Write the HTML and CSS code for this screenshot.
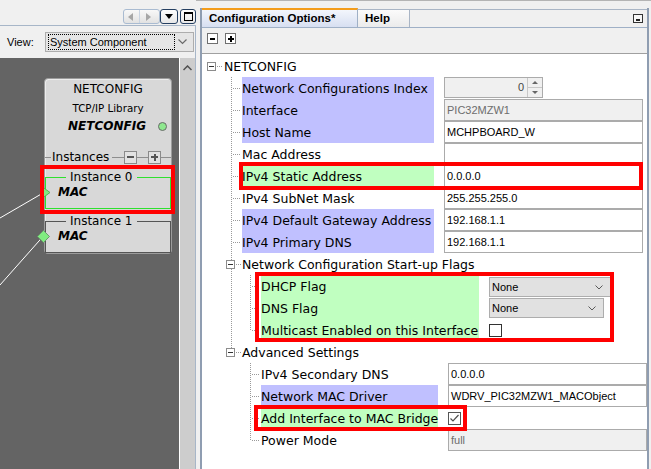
FILE: index.html
```html
<!DOCTYPE html>
<html>
<head>
<meta charset="utf-8">
<title>Configuration Options</title>
<link rel="stylesheet" href="styles.css">
</head>
<body>
<div class="screen">
  <div class="left">
    <div class="winbar">
      <div class="navbtn"><span class="tri-l"></span><span class="sep"></span><span class="tri-r"></span></div>
      <div class="wbtn"><span class="tri-d"></span></div>
      <div class="wbtn wmax"><span class="maxico"></span></div>
    </div>
    <div class="frame">
      <div class="viewrow">
        <span class="viewlbl">View:</span>
        <div class="viewcombo">
          <span class="focus">System Component</span>
          <svg class="chev" width="9" height="6" viewBox="0 0 9 6"><polyline points="0.5,0.5 4.5,4.5 8.5,0.5" fill="none" stroke="#6a6a6a" stroke-width="1.2"/></svg>
        </div>
      </div>
      <div class="canvasrow">
        <div class="canvas">
          <div class="node">
            <div class="ntitle">NETCONFIG</div>
            <div class="nsub">TCP/IP Library</div>
            <div class="nname"><span>NETCONFIG</span><span class="dot"></span></div>
            <div class="inst">
              <span class="ln l1"></span><span class="itxt">Instances</span><span class="ln l2"></span>
              <span class="ibtn iminus"></span><span class="ln l3"></span>
              <span class="ibtn iplus"></span><span class="ln l4"></span>
            </div>
            <fieldset class="fs fs0"><legend>Instance 0</legend><div class="mac">MAC</div></fieldset>
            <fieldset class="fs fs1"><legend>Instance 1</legend><div class="mac">MAC</div></fieldset>
          </div>
          <svg class="wires" width="179" height="411" viewBox="0 0 179 411">
            <line x1="43" y1="135" x2="0" y2="160" stroke="#ffffff" stroke-width="1"/>
            <line x1="43" y1="178.5" x2="0" y2="227" stroke="#ffffff" stroke-width="1"/>
            <polygon points="42.5,129 50,134.5 42.5,140" fill="#80ec80" stroke="#58b058" stroke-width="1"/>
            <polygon points="43.5,172.5 49.5,178.5 43.5,184.5 37.5,178.5" fill="#80ec80" stroke="#6a9a6a" stroke-width="1"/>
          </svg>
        </div>
        <div class="vscroll">
          <svg class="upchev" width="9" height="6" viewBox="0 0 9 6"><polyline points="0.5,5 4.5,1 8.5,5" fill="none" stroke="#505050" stroke-width="1.5"/></svg>
        </div>
      </div>
    </div>
  </div>

  <div class="rightwrap">
    <div class="panel">
      <div class="tabbar">
        <div class="tab active">Configuration Options*</div>
        <div class="tab help">Help</div>
        <div class="tabfill"><span class="minbtn"></span></div>
      </div>
      <div class="toolbar"><span class="tbtn tminus"></span><span class="tbtn tplus"></span></div>
      <div class="tree">
        <div class="row"><span class="g gx"><i class="exp"></i></span><span class="lbl0">NETCONFIG</span></div>

        <div class="row"><span class="g"></span><span class="g gt"></span><span class="lbl w1 lav">Network Configurations Index</span>
          <div class="val spin"><span class="spin-f">0</span><span class="spin-b"><span><i class="up"></i></span><span><i class="dn"></i></span></span></div></div>
        <div class="row"><span class="g"></span><span class="g gt"></span><span class="lbl w1 lav">Interface</span><div class="val box dis">PIC32MZW1</div></div>
        <div class="row"><span class="g"></span><span class="g gt"></span><span class="lbl w1 lav">Host Name</span><div class="val box">MCHPBOARD_W</div></div>
        <div class="row"><span class="g"></span><span class="g gt"></span><span class="lbl w1">Mac Address</span><div class="val box"></div></div>
        <div class="row"><span class="g"></span><span class="g gt"></span><span class="lbl w1 grn">IPv4 Static Address</span><div class="val box">0.0.0.0</div></div>
        <div class="row"><span class="g"></span><span class="g gt"></span><span class="lbl w1">IPv4 SubNet Mask</span><div class="val box">255.255.255.0</div></div>
        <div class="row"><span class="g"></span><span class="g gt"></span><span class="lbl w1 lav">IPv4 Default Gateway Address</span><div class="val box">192.168.1.1</div></div>
        <div class="row"><span class="g"></span><span class="g gt"></span><span class="lbl w1 lav">IPv4 Primary DNS</span><div class="val box">192.168.1.1</div></div>

        <div class="row"><span class="g"></span><span class="g gx gv"><i class="exp"></i></span><span class="lbl">Network Configuration Start-up Flags</span></div>
        <div class="row"><span class="g"></span><span class="g gv"></span><span class="g gt"></span><span class="lbl w2 grn">DHCP Flag</span>
          <div class="val combo c1"><span>None</span><svg width="8" height="5" viewBox="0 0 8 5"><polyline points="0.5,0.5 4,4 7.5,0.5" fill="none" stroke="#5a5a5a" stroke-width="1"/></svg></div></div>
        <div class="row"><span class="g"></span><span class="g gv"></span><span class="g gt"></span><span class="lbl w2 grn">DNS Flag</span>
          <div class="val combo c2"><span>None</span><svg width="8" height="5" viewBox="0 0 8 5"><polyline points="0.5,0.5 4,4 7.5,0.5" fill="none" stroke="#5a5a5a" stroke-width="1"/></svg></div></div>
        <div class="row"><span class="g"></span><span class="g gv"></span><span class="g ge"></span><span class="lbl w2 grn">Multicast Enabled on this Interface</span><span class="val chk"></span></div>

        <div class="row"><span class="g"></span><span class="g gx gh"><i class="exp"></i></span><span class="lbl">Advanced Settings</span></div>
        <div class="row"><span class="g"></span><span class="g"></span><span class="g gt"></span><span class="lbl w3">IPv4 Secondary DNS</span><div class="val box">0.0.0.0</div></div>
        <div class="row"><span class="g"></span><span class="g"></span><span class="g gt"></span><span class="lbl w3 lav">Network MAC Driver</span><div class="val box">WDRV_PIC32MZW1_MACObject</div></div>
        <div class="row"><span class="g"></span><span class="g"></span><span class="g gt"></span><span class="lbl w3 grn">Add Interface to MAC Bridge</span>
          <span class="val chk on"><svg width="11" height="11" viewBox="0 0 11 11"><polyline points="1.5,5.5 4,8 9.5,2" fill="none" stroke="#505050" stroke-width="1.2"/></svg></span></div>
        <div class="row"><span class="g"></span><span class="g"></span><span class="g ge"></span><span class="lbl w3">Power Mode</span><div class="val box dis">full</div></div>
      </div>
    </div>
  </div>

  <div class="mark m0"></div>
  <div class="mark m1"></div>
  <div class="mark m2"></div>
  <div class="mark m3"></div>
</div>
</body>
</html>
```

FILE: styles.css
```css
* { box-sizing: border-box; }
html, body { margin: 0; padding: 0; }
body {
  width: 651px; height: 469px; overflow: hidden;
  background: #f0f0f0;
  font-family: "DejaVu Sans", sans-serif; font-size: 12px; color: #000;
}
.screen { position: relative; display: flex; width: 651px; height: 469px; overflow: hidden; }

/* ---------- left panel ---------- */
.left { width: 196px; flex: none; display: flex; flex-direction: column; }
.winbar { height: 25px; flex: none; display: flex; justify-content: flex-end; align-items: flex-start; padding-top: 9px; }
.navbtn {
  width: 37px; height: 15px; border: 1px solid #a9bbd1; border-radius: 3px;
  background: linear-gradient(#f8f8f8, #e2e2e2);
  display: flex; align-items: center; padding-left: 4px;
}
.tri-l { width: 0; height: 0; border-top: 4.5px solid transparent; border-bottom: 4.5px solid transparent; border-right: 5px solid #a6a6a6; }
.tri-r { width: 0; height: 0; border-top: 4.5px solid transparent; border-bottom: 4.5px solid transparent; border-left: 5px solid #a6a6a6; margin-left: 6px; }
.sep { width: 1px; height: 13px; background: #c9d4e2; margin-left: 6px; }
.wbtn {
  width: 18px; height: 15px; border: 1px solid #253f61; border-radius: 3px;
  background: linear-gradient(#fdfdfd, #e8e8e8);
  display: flex; align-items: center; justify-content: center;
}
.wmax { width: 16px; margin-left: 2px; }
.tri-d { width: 0; height: 0; border-left: 4.5px solid transparent; border-right: 4.5px solid transparent; border-top: 5px solid #000; }
.maxico { width: 9px; height: 9px; border: 1px solid #000; border-top-width: 2px; }

.frame { flex: 1; min-height: 0; display: flex; flex-direction: column; border-top: 1px solid #a7b6c8; border-right: 1px solid #a7b6c8; }
.viewrow { height: 32px; flex: none; display: flex; align-items: center; font-family: "Liberation Sans", sans-serif; font-size: 11px; }
.viewlbl { width: 45px; flex: none; padding-left: 7px; }
.viewcombo {
  width: 149px; height: 20px; border: 1px solid #adadad; background: #e5e5e5;
  display: flex; align-items: center; padding: 0 6px 0 2px;
}
.focus { width: 127px; height: 16px; border: 1px dotted #000; line-height: 14px; padding-left: 1px; white-space: nowrap; }
.chev { margin-left: auto; }

.canvasrow { flex: 1; min-height: 0; display: flex; }
.canvas { width: 179px; flex: none; background: #646464; position: relative; overflow: hidden; }
.vscroll { width: 16px; flex: none; border-left: 1px solid #fff; background: #cdcdcd; padding: 7px 0 0 3px; }
.upchev { display: block; }

.wires { position: absolute; left: 0; top: 0; }

.node {
  position: absolute; left: 44px; top: 20px; width: 128px; height: 176px;
  border: 1px solid #9c9c9c; border-radius: 4px; background: #d8d8d8;
  box-shadow: inset 1px 1px 0 #ececec;
  display: flex; flex-direction: column;
}
.ntitle { line-height: 18px; padding-top: 1px; text-align: center; font-size: 12px; }
.nsub { line-height: 20px; text-align: center; font-size: 10.3px; }
.nname { line-height: 17px; display: flex; justify-content: flex-end; align-items: center; padding-right: 4px; font-weight: bold; font-style: italic; }
.dot { width: 9px; height: 9px; border-radius: 50%; background: #8fe88f; border: 1px solid #6a6a6a; margin-left: 12px; }

.inst { margin-top: 15px; height: 14px; display: flex; align-items: center; }
.ln { height: 1px; background: #8e8e8e; flex: none; }
.l1 { width: 6px; }
.itxt { margin: 0 3px 0 1px; line-height: 14px; }
.l2 { width: 12px; }
.l3 { width: 11px; }
.l4 { flex: 1; }
.ibtn { width: 13px; height: 13px; flex: none; border: 1px solid #8a8a8a; background-color: #e2e2e2; }
.iminus { background: linear-gradient(#555, #555) center / 7px 2px no-repeat, #e2e2e2; }
.iplus { background: linear-gradient(#555, #555) center / 7px 2px no-repeat, linear-gradient(#555, #555) center / 2px 7px no-repeat, #e2e2e2; }

.fs { margin: 6px 0 0 0; padding: 0 0 8px 12px; border: 1px solid #555; min-width: 0; }
.fs0 { border-color: #2ee02e; }
.fs1 { margin-top: 5px; }
.fs legend { margin-left: 8px; padding: 0 4px; line-height: 14px; font-size: 12px; }
.mac { line-height: 16px; font-weight: bold; font-style: italic; }

/* ---------- right panel ---------- */
.rightwrap { flex: 1; display: flex; border-top: 1px solid #b4b4b4; padding: 7px 0 0 4px; }
.panel {
  width: 449px; flex: none; display: flex; flex-direction: column;
  border-left: 2px solid #8f9db1; border-right: 2px solid #8f9db1; background: #f0f0f0;
}
.tabbar { height: 20px; flex: none; display: flex; border-bottom: 1px solid #9fb0c6; font-family: "Liberation Sans", sans-serif; font-size: 11.5px; font-weight: bold; }
.tab { line-height: 17px; padding-left: 7px; white-space: nowrap; }
.tab.active { width: 156px; border-top: 2px solid #f39c1a; border-right: 1px solid #9fb0c6; background: linear-gradient(#f3f6fc, #d7dff1); }
.tab.help { width: 52px; margin-top: 1px; border-top: 1px solid #a9b5c5; border-right: 1px solid #a9b5c5; background: linear-gradient(#fbfbfb, #ebebeb); padding-left: 7px; }
.tabfill { flex: 1; margin-top: 1px; border-top: 1px solid #a9b5c5; display: flex; justify-content: flex-end; align-items: flex-start; padding: 4px 4px 0 0; }
.minbtn { width: 10px; height: 9px; border: 1px solid #333; background: linear-gradient(#222, #222) 2px 4px / 4px 2px no-repeat, #f6f6f6; }

.toolbar { height: 26px; flex: none; display: flex; align-items: flex-start; gap: 6px; padding: 5px 0 0 5px; border-bottom: 1px solid #a0a0a0; }
.tbtn { width: 11px; height: 11px; border: 1px solid #6f6f6f; }
.tminus { background: linear-gradient(#000, #000) center / 5px 2px no-repeat, #fff; }
.tplus { margin-left: 1px; background: linear-gradient(#000, #000) center / 6px 2px no-repeat, linear-gradient(#000, #000) center / 2px 6px no-repeat, #fff; }

.tree { flex: 1; min-height: 0; background: #fff; padding: 1px 0 0 1px; overflow: hidden; }
.row { display: flex; height: 22px; flex: none; }
.g { width: 19px; flex: none; display: block; }
.gv { background: repeating-linear-gradient(to bottom, #9a9a9a 0 1px, transparent 1px 2px) 9px 0 / 1px 100% no-repeat; }
.gt {
  background:
    repeating-linear-gradient(to right, #9a9a9a 0 1px, transparent 1px 2px) 11px 11px / 8px 1px no-repeat,
    repeating-linear-gradient(to bottom, #9a9a9a 0 1px, transparent 1px 2px) 9px 0 / 1px 100% no-repeat;
}
.ge {
  background:
    repeating-linear-gradient(to right, #9a9a9a 0 1px, transparent 1px 2px) 11px 11px / 8px 1px no-repeat,
    repeating-linear-gradient(to bottom, #9a9a9a 0 1px, transparent 1px 2px) 9px 0 / 1px 12px no-repeat;
}
.gx { background: repeating-linear-gradient(to right, #9a9a9a 0 1px, transparent 1px 2px) 14px 11px / 5px 1px no-repeat; }
.gx.gv {
  background:
    repeating-linear-gradient(to right, #9a9a9a 0 1px, transparent 1px 2px) 14px 11px / 5px 1px no-repeat,
    repeating-linear-gradient(to bottom, #9a9a9a 0 1px, transparent 1px 2px) 9px 0 / 1px 100% no-repeat;
}
.gx.gh {
  background:
    repeating-linear-gradient(to right, #9a9a9a 0 1px, transparent 1px 2px) 14px 11px / 5px 1px no-repeat,
    repeating-linear-gradient(to bottom, #9a9a9a 0 1px, transparent 1px 2px) 9px 0 / 1px 8px no-repeat;
}
.exp {
  display: block; width: 9px; height: 9px; margin: 7px 0 0 4px;
  border: 1px solid #8c8c8c;
  background: linear-gradient(#333, #333) center / 5px 1px no-repeat, #fff;
}
.lbl0 { margin-left: 2px; height: 22px; padding-top: 1px; line-height: 22px; font-size: 12.5px; white-space: nowrap; }
.lbl { margin-left: 1px; height: 22px; padding-top: 1px; line-height: 21px; font-size: 12.5px; white-space: nowrap; flex: none; }
.w1 { width: 192px; }
.w2 { width: 218px; }
.w3 { width: 177px; }
.lav { background: #c0c0ff; }
.grn { background: #c0ffc0; }

.val { margin-left: 10px; flex: none; }
.box {
  width: 199px; height: 22px; border: 1px solid #ababab; background: #fff;
  font: 11px/20px "Liberation Sans", sans-serif; padding-left: 2px; white-space: nowrap; color: #000;
}
.box.dis { background: #f0f0f0; color: #6d6d6d; }

.spin { width: 99px; height: 21px; border: 1px solid #ababab; background: #f0f0f0; display: flex; }
.spin-f { flex: 1; text-align: right; padding-right: 3px; font: 11px/19px "Liberation Sans", sans-serif; color: #444; }
.spin-b { width: 15px; border-left: 1px solid #c8c8c8; display: flex; flex-direction: column; }
.spin-b > span { flex: 1; display: flex; align-items: center; justify-content: center; }
.spin-b > span + span { border-top: 1px solid #c8c8c8; }
.up { width: 0; height: 0; border-left: 3px solid transparent; border-right: 3px solid transparent; border-bottom: 3px solid #666; }
.dn { width: 0; height: 0; border-left: 3px solid transparent; border-right: 3px solid transparent; border-top: 3px solid #666; }

.combo {
  height: 20px; border: 1px solid #adadad; background: #e1e1e1;
  display: flex; align-items: center; justify-content: space-between;
  padding: 0 7px 0 2px; font: 11px "Liberation Sans", sans-serif;
}
.c1 { width: 122px; margin-top: 2px; }
.c2 { width: 115px; margin-top: 1px; }

.chk { width: 13px; height: 13px; margin-top: 5px; border: 1px solid #333; background: #fff; display: block; }
.chk.on { border-color: #555; }
.chk svg { display: block; margin: 0; }

/* ---------- annotation overlays ---------- */
.mark { position: absolute; border: 4px solid #ff0000; pointer-events: none; }
.m0 { left: 40px; top: 165px; width: 135px; height: 49px; }
.m1 { left: 239px; top: 162px; width: 404px; height: 28px; }
.m2 { left: 255px; top: 272px; width: 359px; height: 70px; }
.m3 { left: 254px; top: 405px; width: 213px; height: 26px; }
```
